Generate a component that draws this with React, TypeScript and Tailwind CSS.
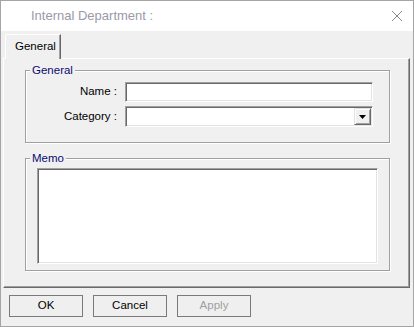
import React from 'react';

const sunken =
  'border border-t-[#a0a0a0] border-l-[#a0a0a0] border-b-white border-r-white bg-white shadow-[inset_1px_1px_0_#696969,inset_-1px_-1px_0_#e3e3e3]';

const GroupBox: React.FC<{ title: string; className?: string; children: React.ReactNode }> = ({
  title,
  className = '',
  children,
}) => (
  <fieldset
    className={`border border-[#a0a0a0] shadow-[1px_1px_0_#fff,inset_1px_1px_0_#fff] ${className}`}
  >
    <legend className="ml-[4px] px-[2px] bg-[#f0f0f0] text-[11.5px] leading-[13px] text-[#0c0c70]">
      {title}
    </legend>
    {children}
  </fieldset>
);

const DialogButton: React.FC<{ label: string; disabled?: boolean }> = ({ label, disabled }) => (
  <button
    disabled={disabled}
    className={`w-[74px] h-[22px] border border-[#7a7a7a] bg-[#efefef] text-[11.5px] leading-none ${
      disabled ? 'text-[#a0a0a0]' : 'text-black'
    }`}
  >
    {label}
  </button>
);

export default function App() {
  return (
    <div className="w-[414px] h-[327px] border border-[#a5a5a5] bg-[#f0f0f0] flex flex-col font-['Liberation_Sans',Arial,sans-serif] text-black select-none">
      {/* Title bar */}
      <div className="h-[30px] bg-white flex items-center justify-between shrink-0">
        <span className="ml-[30px] text-[13px] text-[#9c99a8]">Internal Department :</span>
        <svg width="12" height="12" viewBox="0 0 12 12" className="mr-[10px]">
          <path d="M1 1 L11 11 M11 1 L1 11" stroke="#8c8c8c" strokeWidth="1" fill="none" />
        </svg>
      </div>

      {/* Tabs */}
      <div className="pt-[3px] pl-[2px] flex flex-col">
        <div className="relative z-10 ml-[2px] -mb-[1px] w-[56px] h-[25px] bg-[#f0f0f0] border-t border-l border-white border-r border-r-[#696969] shadow-[inset_-1px_0_0_#a0a0a0] rounded-tl-[2px] flex items-center">
          <span className="ml-[9px] text-[11.5px]">General</span>
        </div>

        <div className="w-[407px] h-[230px] border border-t-white border-l-white border-r-[#696969] border-b-[#696969] shadow-[inset_-1px_-1px_0_#a0a0a0] pl-[21px] pt-[5px]">
          <GroupBox title="General" className="w-[365px] h-[79px]">
            <div className="grid grid-cols-[91px_248px] gap-x-[8px] gap-y-[4px] pt-[5px] items-center">
              <span className="text-[11.5px] text-right">Name :</span>
              <div className={`h-[20px] ${sunken}`} />
              <span className="text-[11.5px] text-right">Category :</span>
              <div className={`h-[21px] ${sunken} flex justify-end items-center pr-[1px]`}>
                <div className="w-[17px] h-[17px] bg-[#f0f0f0] border border-t-[#e3e3e3] border-l-[#e3e3e3] border-r-[#696969] border-b-[#696969] shadow-[inset_1px_1px_0_#fff,inset_-1px_-1px_0_#a0a0a0] flex items-center justify-center">
                  <svg width="7" height="4" viewBox="0 0 7 4">
                    <path d="M0 0 H7 L3.5 4 Z" fill="#000" />
                  </svg>
                </div>
              </div>
            </div>
          </GroupBox>

          <GroupBox title="Memo" className="w-[365px] h-[119px] mt-[9px]">
            <div className="pt-[3px] pl-[11px]">
              <div className={`w-[341px] h-[96px] ${sunken}`} />
            </div>
          </GroupBox>
        </div>
      </div>

      {/* Buttons */}
      <div className="flex gap-[10px] pl-[8px] pt-[7px]">
        <DialogButton label="OK" />
        <DialogButton label="Cancel" />
        <DialogButton label="Apply" disabled />
      </div>
    </div>
  );
}
